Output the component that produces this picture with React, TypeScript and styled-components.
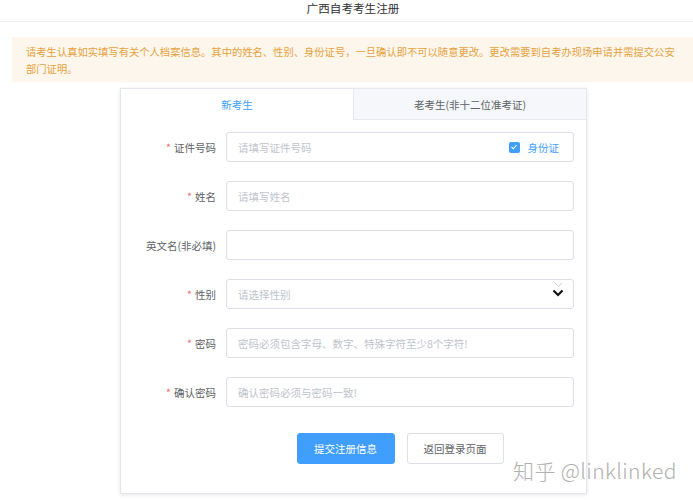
import React from "react";
import styled, { createGlobalStyle } from "styled-components";

const Global = createGlobalStyle`
  html, body { margin: 0; padding: 0; background: #fff; }
  body { font-family: "Noto Sans CJK SC", "Noto Sans", sans-serif; color: #606266; }
  * { box-sizing: border-box; }
`;

const Page = styled.div`
  position: relative;
  width: 693px;
  height: 500px;
  overflow: hidden;
  background: #fff;
`;

const Header = styled.header`
  height: 22px;
  border-bottom: 1px solid #eef0f3;
  display: flex;
  align-items: center;
  justify-content: center;
  font-size: 11.6px;
  color: #303133;
  line-height: 16px;
  padding: 0 0 6px 13px;
`;

const Notice = styled.div`
  margin: 15px 0 0 12px;
  height: 45px;
  background: #fdf6ec;
  color: #e6a23c;
  font-size: 10.3px;
  line-height: 17px;
  padding: 6px 12px 0 14px;
`;

const Card = styled.div`
  margin: 6px 0 0 120px;
  width: 467px;
  height: 406px;
  border: 1px solid #e4e7ed;
  box-shadow: 0 1px 4px rgba(0, 0, 0, 0.1);
  background: #fff;
  display: flex;
  flex-direction: column;
`;

const Tabs = styled.div`
  display: grid;
  grid-template-columns: 232px 1fr;
  height: 31px;
`;

const Tab = styled.div<{ $active?: boolean }>`
  display: flex;
  align-items: center;
  justify-content: center;
  font-size: 10.5px;
  color: ${(p) => (p.$active ? "#409eff" : "#606266")};
  background: ${(p) => (p.$active ? "#fff" : "#f5f7fa")};
  border-bottom: ${(p) => (p.$active ? "none" : "1px solid #e4e7ed")};
  border-left: ${(p) => (p.$active ? "none" : "1px solid #e4e7ed")};
`;

const Form = styled.div`
  display: grid;
  grid-template-columns: 105px 1fr;
  row-gap: 19px;
  padding: 12px 12px 0 0;
`;

const Label = styled.label`
  display: flex;
  align-items: center;
  justify-content: flex-end;
  padding-right: 10px;
  height: 30px;
  font-size: 10.5px;
  color: #606266;
  white-space: nowrap;
`;

const Star = styled.span`
  color: #f56c6c;
  margin-right: 3px;
`;

const InputBox = styled.div`
  height: 30px;
  border: 1px solid #dcdfe6;
  border-radius: 3px;
  display: flex;
  align-items: center;
  padding: 0 11px;
  font-size: 10.5px;
  color: #c0c4cc;
`;

const Placeholder = styled.span`
  flex: 1;
  white-space: nowrap;
`;

const CheckWrap = styled.span`
  display: flex;
  align-items: center;
  gap: 8px;
  color: #409eff;
  font-size: 10.5px;
  margin-right: 3px;
`;

const CheckBox = styled.span`
  width: 11px;
  height: 11px;
  border-radius: 2px;
  background: #409eff;
  display: flex;
  align-items: center;
  justify-content: center;
`;

const Arrows = styled.span`
  display: flex;
  flex-direction: column;
  align-items: center;
  gap: 1px;
  margin-right: -2px;
  margin-top: -9px;
`;

const Buttons = styled.div`
  grid-column: 2;
  display: flex;
  justify-content: center;
  gap: 12px;
  margin-top: 7px;
`;

const Button = styled.button<{ $primary?: boolean }>`
  height: 31px;
  width: ${(p) => (p.$primary ? "98px" : "97px")};
  border-radius: 3px;
  font-family: inherit;
  font-size: 10.5px;
  cursor: pointer;
  border: 1px solid ${(p) => (p.$primary ? "#409eff" : "#dcdfe6")};
  background: ${(p) => (p.$primary ? "#409eff" : "#fff")};
  color: ${(p) => (p.$primary ? "#fff" : "#606266")};
  padding: 0;
`;

const Watermark = styled.div`
  position: absolute;
  left: 513px;
  top: 455px;
  font-size: 21px;
  line-height: 30px;
  color: #b0b0b0;
  font-weight: 300;
  letter-spacing: 0.4px;
  text-shadow: 0 0 1px #fff;
  white-space: nowrap;
`;

const fields: { label: string; required: boolean; placeholder: string; kind?: "id" | "select" }[] = [
  { label: "证件号码", required: true, placeholder: "请填写证件号码", kind: "id" },
  { label: "姓名", required: true, placeholder: "请填写姓名" },
  { label: "英文名(非必填)", required: false, placeholder: "" },
  { label: "性别", required: true, placeholder: "请选择性别", kind: "select" },
  { label: "密码", required: true, placeholder: "密码必须包含字母、数字、特殊字符至少8个字符!" },
  { label: "确认密码", required: true, placeholder: "确认密码必须与密码一致!" },
];

export default function App() {
  return (
    <Page>
      <Global />
      <Header>广西自考考生注册</Header>
      <Notice>
        请考生认真如实填写有关个人档案信息。其中的姓名、性别、身份证号，一旦确认即不可以随意更改。更改需要到自考办现场申请并需提交公安部门证明。
      </Notice>
      <Card>
        <Tabs>
          <Tab $active>新考生</Tab>
          <Tab>老考生(非十二位准考证)</Tab>
        </Tabs>
        <Form>
          {fields.map((f) => (
            <React.Fragment key={f.label}>
              <Label>
                {f.required && <Star>*</Star>}
                {f.label}
              </Label>
              <InputBox>
                <Placeholder>{f.placeholder}</Placeholder>
                {f.kind === "id" && (
                  <CheckWrap>
                    <CheckBox>
                      <svg width="8" height="8" viewBox="0 0 8 8">
                        <polyline points="1.5,4 3.3,5.8 6.5,2.2" fill="none" stroke="#fff" strokeWidth="1.1" />
                      </svg>
                    </CheckBox>
                    身份证
                  </CheckWrap>
                )}
                {f.kind === "select" && (
                  <Arrows>
                    <svg width="9" height="6" viewBox="0 0 9 6">
                      <polyline points="1,1 4.5,4.5 8,1" fill="none" stroke="#c8ccd2" strokeWidth="1" />
                    </svg>
                    <svg width="12" height="8" viewBox="0 0 12 8">
                      <polyline points="1.5,1.5 6,6 10.5,1.5" fill="none" stroke="#111" strokeWidth="2.2" />
                    </svg>
                  </Arrows>
                )}
              </InputBox>
            </React.Fragment>
          ))}
          <Buttons>
            <Button $primary>提交注册信息</Button>
            <Button>返回登录页面</Button>
          </Buttons>
        </Form>
      </Card>
      <Watermark>知乎 @linklinked</Watermark>
    </Page>
  );
}
